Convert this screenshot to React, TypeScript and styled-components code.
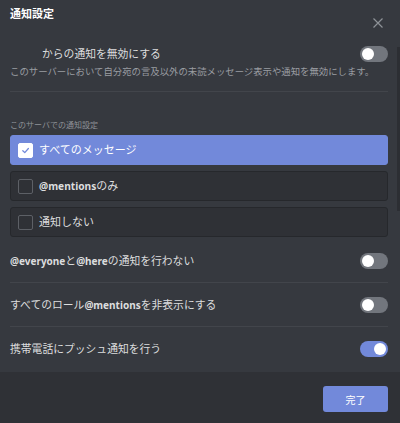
import React, { useState } from "react";
import styled, { createGlobalStyle } from "styled-components";

const GlobalStyle = createGlobalStyle`
  html, body {
    margin: 0;
    padding: 0;
    background: #36393f;
  }
  body {
    font-family: "Noto Sans", "Noto Sans CJK JP", sans-serif;
  }
`;

const Modal = styled.div`
  position: relative;
  display: flex;
  flex-direction: column;
  width: 400px;
  height: 423px;
  background: #36393f;
  overflow: hidden;
`;

const Header = styled.div`
  display: flex;
  justify-content: space-between;
  align-items: flex-start;
  padding: 7px 17px 0 10px;
  height: 28px;
  box-sizing: border-box;
`;

const Title = styled.h2`
  margin: 0;
  font-size: 11px;
  line-height: 14px;
  font-weight: 700;
  color: #ffffff;
`;

const CloseButton = styled.button`
  margin-top: 11px;
  width: 10px;
  height: 10px;
  padding: 0;
  border: none;
  background: none;
  display: flex;
  cursor: pointer;
`;

const Content = styled.div`
  flex: 1;
  display: flex;
  flex-direction: column;
  padding: 0 12px 0 10px;
`;

const MuteRow = styled.div`
  display: flex;
  align-items: center;
  justify-content: space-between;
  height: 16px;
  margin-top: 18px;
  padding-left: 32px;
`;

const Label = styled.span`
  font-size: 10.8px;
  line-height: 14px;
  color: #dcddde;

  b {
    font-weight: 700;
    font-size: 10px;
  }
`;

const Description = styled.p`
  margin: 3px 0 0;
  font-size: 9.4px;
  line-height: 13px;
  color: #9a9da2;
  white-space: nowrap;
`;

const Divider = styled.div<{ $top?: number }>`
  height: 1px;
  background: #42454b;
  margin-top: ${(p) => p.$top ?? 0}px;
`;

const SectionLabel = styled.div`
  margin-top: 27px;
  font-size: 8px;
  line-height: 11px;
  color: #8e9297;
`;

const Options = styled.div`
  display: flex;
  flex-direction: column;
  gap: 6px;
  margin-top: 5px;
`;

const Option = styled.div<{ $selected?: boolean }>`
  display: flex;
  align-items: center;
  gap: 6px;
  height: 30px;
  box-sizing: border-box;
  padding: 0 7px;
  border-radius: 3px;
  background: ${(p) => (p.$selected ? "#7289da" : "#2f3136")};
  border: 1px solid ${(p) => (p.$selected ? "#7289da" : "#26282c")};
  cursor: pointer;
`;

const OptionText = styled.span<{ $selected?: boolean }>`
  font-size: 11px;
  line-height: 14px;
  color: ${(p) => (p.$selected ? "#ffffff" : "#dcddde")};

  b {
    font-weight: 700;
    font-size: 10.2px;
  }
`;

const Checkbox = styled.span<{ $checked?: boolean }>`
  display: flex;
  align-items: center;
  justify-content: center;
  width: 15px;
  height: 15px;
  box-sizing: border-box;
  border-radius: 2px;
  background: ${(p) => (p.$checked ? "#ffffff" : "transparent")};
  border: 1px solid ${(p) => (p.$checked ? "#ffffff" : "#5d6066")};
`;

const ToggleRows = styled.div`
  margin-top: 2px;
  display: flex;
  flex-direction: column;
`;

const ToggleRow = styled.div`
  display: flex;
  align-items: center;
  justify-content: space-between;
  height: 43px;
`;

const Switch = styled.button<{ $on?: boolean }>`
  position: relative;
  width: 28px;
  height: 16px;
  padding: 0;
  border: none;
  border-radius: 8px;
  background: ${(p) => (p.$on ? "#7289da" : "#72767d")};
  cursor: pointer;

  &::after {
    content: "";
    position: absolute;
    top: 2px;
    left: ${(p) => (p.$on ? 14 : 2)}px;
    width: 12px;
    height: 12px;
    border-radius: 50%;
    background: #ffffff;
  }
`;

const Footer = styled.div`
  display: flex;
  justify-content: flex-end;
  align-items: flex-start;
  height: 51px;
  box-sizing: border-box;
  padding: 14px 12px 0 0;
  background: #2f3136;
`;

const DoneButton = styled.button`
  width: 65px;
  height: 26px;
  border: none;
  border-radius: 3px;
  background: #7289da;
  color: #ffffff;
  font-family: inherit;
  font-size: 10px;
  cursor: pointer;
`;

const ScrollThumb = styled.div`
  position: absolute;
  top: 47px;
  right: 0;
  width: 3px;
  height: 164px;
  background: #2c2e33;
`;

const CheckIcon = () => (
  <svg width="9" height="9" viewBox="0 0 10 10">
    <polyline
      points="2,5.2 4.2,7.4 8.2,2.8"
      fill="none"
      stroke="#7289da"
      strokeWidth="1.4"
      strokeLinecap="round"
      strokeLinejoin="round"
    />
  </svg>
);

const CloseIcon = () => (
  <svg width="10" height="10" viewBox="0 0 10 10">
    <path d="M0.5 0.5 L9.5 9.5 M9.5 0.5 L0.5 9.5" stroke="#8e9297" strokeWidth="1.2" />
  </svg>
);

const levels: { key: string; label: React.ReactNode }[] = [
  { key: "all", label: "すべてのメッセージ" },
  {
    key: "mentions",
    label: (
      <>
        <b>@mentions</b>のみ
      </>
    ),
  },
  { key: "none", label: "通知しない" },
];

const App = () => {
  const [level, setLevel] = useState("all");
  const [muted, setMuted] = useState(false);
  const [suppressEveryone, setSuppressEveryone] = useState(false);
  const [suppressRoles, setSuppressRoles] = useState(false);
  const [push, setPush] = useState(true);

  return (
    <>
      <GlobalStyle />
      <Modal>
        <Header>
          <Title>通知設定</Title>
          <CloseButton aria-label="閉じる">
            <CloseIcon />
          </CloseButton>
        </Header>
        <Content>
          <MuteRow>
            <Label>からの通知を無効にする</Label>
            <Switch $on={muted} onClick={() => setMuted(!muted)} />
          </MuteRow>
          <Description>
            このサーバーにおいて自分宛の言及以外の未読メッセージ表示や通知を無効にします。
          </Description>
          <Divider $top={13} />
          <SectionLabel>このサーバでの通知設定</SectionLabel>
          <Options>
            {levels.map((l) => (
              <Option
                key={l.key}
                $selected={level === l.key}
                onClick={() => setLevel(l.key)}
              >
                <Checkbox $checked={level === l.key}>
                  {level === l.key && <CheckIcon />}
                </Checkbox>
                <OptionText $selected={level === l.key}>{l.label}</OptionText>
              </Option>
            ))}
          </Options>
          <ToggleRows>
            <ToggleRow>
              <Label>
                <b>@everyone</b>と<b>@here</b>の通知を行わない
              </Label>
              <Switch
                $on={suppressEveryone}
                onClick={() => setSuppressEveryone(!suppressEveryone)}
              />
            </ToggleRow>
            <Divider />
            <ToggleRow>
              <Label>
                すべてのロール<b>@mentions</b>を非表示にする
              </Label>
              <Switch
                $on={suppressRoles}
                onClick={() => setSuppressRoles(!suppressRoles)}
              />
            </ToggleRow>
            <Divider />
            <ToggleRow>
              <Label>携帯電話にプッシュ通知を行う</Label>
              <Switch $on={push} onClick={() => setPush(!push)} />
            </ToggleRow>
          </ToggleRows>
        </Content>
        <Footer>
          <DoneButton>完了</DoneButton>
        </Footer>
        <ScrollThumb />
      </Modal>
    </>
  );
};

export default App;
